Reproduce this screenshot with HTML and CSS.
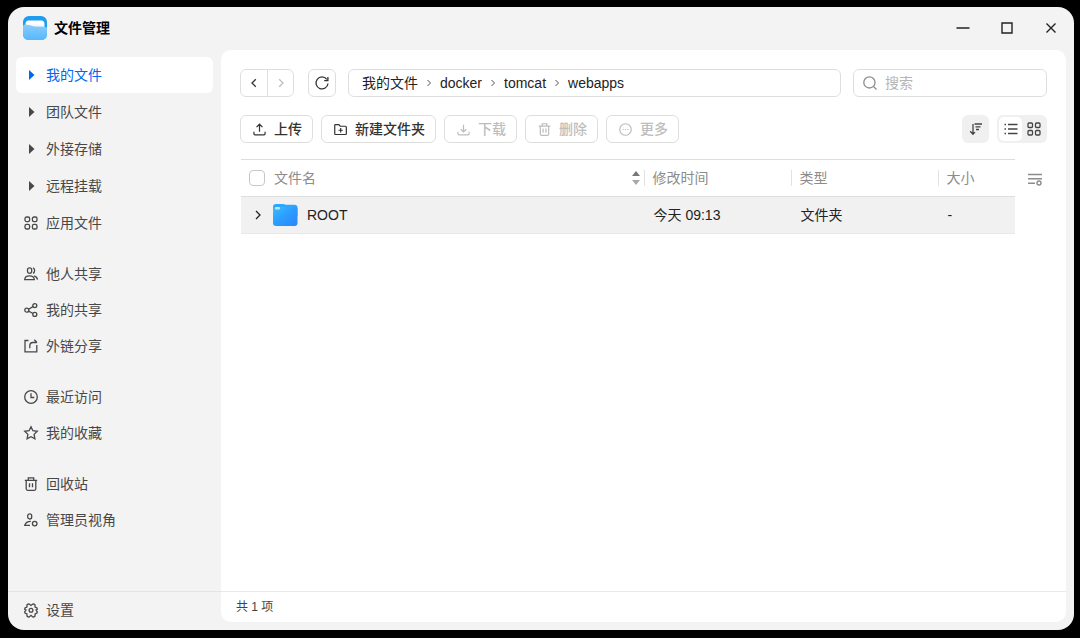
FILE: index.html
```html
<!DOCTYPE html>
<html lang="zh-CN">
  <head>
    <meta charset="UTF-8">
    <meta name="viewport" content="width=device-width, initial-scale=1">
    <title>文件管理</title>
    <link rel="stylesheet" href="styles.css">
  </head>
  <body>
    <div class="window">
      <header class="titlebar">
        <svg class="app-logo" viewBox="0 0 24 24">
          <defs>
            <linearGradient id="logoFront" x1="0" y1="0" x2="0" y2="1">
              <stop offset="0" stop-color="#8accfb"/>
              <stop offset="1" stop-color="#55b8fb"/>
            </linearGradient>
            <linearGradient id="logoPaper" x1="0" y1="0" x2="0" y2="1">
              <stop offset="0.3" stop-color="#fff"/>
              <stop offset="1" stop-color="#c9e8fe"/>
            </linearGradient>
          </defs>
          <rect width="24" height="24" rx="6" fill="#1e9cf0"/>
          <path d="M2.500 8q0-3.500 3-3.500h13q3 0 3 3.500v6h-19z" fill="url(#logoPaper)"/>
          <path d="M0 10.500q0-2 2-2 2.500 0 5 .8t5 1.200l9.500.2q2.500 0 2.500 1.500V18q0 6-6 6H6q-6 0-6-6z" fill="url(#logoFront)"/>
        </svg>
        <h1>文件管理</h1>
        <div class="window-controls">
          <button aria-label="最小化"><svg viewBox="0 0 14 14"><path d="M0.500 7h13"/></svg></button>
          <button aria-label="最大化"><svg viewBox="0 0 14 14"><path d="M2 2h10v10H2z"/></svg></button>
          <button aria-label="关闭"><svg viewBox="0 0 14 14"><path d="M2.500 2.500l9 9M11.500 2.500l-9 9"/></svg></button>
        </div>
      </header>

      <aside class="sidebar">
        <nav class="side-nav">
          <div class="nav-group tree">
            <a href="#" class="nav-item active"><svg class="icon arrow" viewBox="0 0 14 14"><path d="M5 2v10l5.500-5z"/></svg>我的文件</a>
            <a href="#" class="nav-item"><svg class="icon arrow" viewBox="0 0 14 14"><path d="M5 2v10l5.500-5z"/></svg>团队文件</a>
            <a href="#" class="nav-item"><svg class="icon arrow" viewBox="0 0 14 14"><path d="M5 2v10l5.500-5z"/></svg>外接存储</a>
            <a href="#" class="nav-item"><svg class="icon arrow" viewBox="0 0 14 14"><path d="M5 2v10l5.500-5z"/></svg>远程挂载</a>
            <a href="#" class="nav-item">
              <svg class="icon" viewBox="0 0 14 14"><rect x="1" y="1" width="4.600" height="4.600" rx="1.600"/><rect x="8.400" y="1" width="4.600" height="4.600" rx="1.600"/><rect x="1" y="8.400" width="4.600" height="4.600" rx="1.600"/><rect x="8.400" y="8.400" width="4.600" height="4.600" rx="1.600"/></svg>应用文件
            </a>
          </div>
          <div class="nav-group">
            <a href="#" class="nav-item">
              <svg class="icon" viewBox="0 0 14 14"><rect x="3.500" y=".8" width="4.200" height="5.600" rx="2.100"/><path d="M9 .9c2.200.7 2.200 4.700 0 5.400M.7 12.600c.2-5 9.400-5 9.600 0zM10.200 8.800c1.800.6 3 1.900 3.300 3.800"/></svg>他人共享
            </a>
            <a href="#" class="nav-item">
              <svg class="icon" viewBox="0 0 14 14"><circle cx="2.800" cy="7.200" r="2"/><circle cx="10.800" cy="2.600" r="2"/><circle cx="10.800" cy="11.400" r="2"/><path d="M4.600 6.200L9 3.600M4.600 8.200L9 10.500"/></svg>我的共享
            </a>
            <a href="#" class="nav-item">
              <svg class="icon" viewBox="0 0 14 14"><path d="M4.500 1.500H1v11.300h11.800V6M5.800 9.300V7q0-3.500 3-3.500h4M10.300.8L13 3.500"/></svg>外链分享
            </a>
          </div>
          <div class="nav-group">
            <a href="#" class="nav-item">
              <svg class="icon" viewBox="0 0 14 14"><circle cx="7" cy="7" r="6.300"/><path d="M7 3.200v4.300h3.300"/></svg>最近访问
            </a>
            <a href="#" class="nav-item">
              <svg class="icon" viewBox="0 0 14 14"><path d="M7 .7l1.900 4 4.400.6-3.200 3.100.8 4.500L7 10.800l-3.900 2.100.8-4.500L.7 5.300l4.400-.6z"/></svg>我的收藏
            </a>
          </div>
          <div class="nav-group">
            <a href="#" class="nav-item">
              <svg class="icon" viewBox="0 0 14 14"><path d="M.8 3.300h12.400M4.300 3V.8h5.400V3M2.200 3.500v8.300q0 1.500 1.500 1.500h6.600q1.500 0 1.500-1.500V3.500M5.500 6.200v4M8.500 6.200v4"/></svg>回收站
            </a>
            <a href="#" class="nav-item">
              <svg class="icon" viewBox="0 0 14 14"><rect x="3.700" y=".8" width="4" height="5.200" rx="2"/><path d="M6.800 8.300C3.500 8.300 1.500 9.800.8 12.300H6"/><circle cx="10.700" cy="10.600" r="2.300"/></svg>管理员视角
            </a>
          </div>
        </nav>
        <div class="side-footer">
          <a href="#" class="nav-item">
            <svg class="icon" viewBox="0 0 14 14"><path d="M4.300 1l1 .1L7 2.500 8.700 1.100l1-.1 1.300.9.1 2.200 1.900.9.300 1.200L12 7l1.300 1.800-.3 1.200-1.900.9-.1 2.200-1.300.9-1-.1L7 12.300l-1.700 1.600-1 .1-1.300-.9-.1-2.200-1.900-.9-.3-1.200L2 7 .7 6.200 1 5l1.900-.9.1-2.200z"/><circle cx="7" cy="7.300" r="1.900"/></svg>设置
          </a>
        </div>
      </aside>

      <main class="content">
        <div class="location-bar">
          <div class="history">
            <button aria-label="后退"><svg class="icon" viewBox="0 0 14 14"><path d="M8.800 3.200L5 7l3.800 3.800"/></svg></button>
            <button aria-label="前进" disabled><svg class="icon" viewBox="0 0 14 14"><path d="M5.200 3.200L9 7l-3.800 3.800"/></svg></button>
          </div>
          <button class="refresh" aria-label="刷新"><svg class="icon" viewBox="0 0 14 14"><path d="M11.800 3.300A6 6 0 1 0 13 7.500M12.900 1v3.700H9.200"/></svg></button>
          <nav class="breadcrumb">
            <a href="#">我的文件</a>
            <svg viewBox="0 0 6 8"><path d="M1.500 1L4.500 4l-3 3"/></svg>
            <a href="#">docker</a>
            <svg viewBox="0 0 6 8"><path d="M1.500 1L4.500 4l-3 3"/></svg>
            <a href="#">tomcat</a>
            <svg viewBox="0 0 6 8"><path d="M1.500 1L4.500 4l-3 3"/></svg>
            <a href="#">webapps</a>
          </nav>
          <label class="search">
            <svg class="icon" viewBox="0 0 14 14"><circle cx="6.400" cy="6.400" r="5.600"/><path d="M10.500 10.500l3 3"/></svg>
            <input type="search" placeholder="搜索" aria-label="搜索">
          </label>
        </div>

        <div class="toolbar">
          <button class="btn"><svg class="icon" viewBox="0 0 14 14"><path d="M1 9.500v2.200q0 1.100 1.100 1.100h9.800q1.100 0 1.100-1.100V9.500M7 9.500V1.500M3.800 4.500L7 1.300l3.200 3.200"/></svg>上传</button>
          <button class="btn"><svg class="icon" viewBox="0 0 14 14"><path d="M.8 11.200V2.500q0-.8.8-.8h3.600l1.500 1.800h5.600q1 0 1 1v6.900q0 1-1 1H1.600q-.8 0-.8-1.200zM7.200 5.500v4.600M4.900 7.800h4.600"/></svg>新建文件夹</button>
          <button class="btn" disabled><svg class="icon" viewBox="0 0 14 14"><path d="M1 9.500v2.200q0 1.100 1.100 1.100h9.800q1.100 0 1.100-1.100V9.500M7 2v7.500M4 6.700l3 3 3-3"/></svg>下载</button>
          <button class="btn" disabled><svg class="icon" viewBox="0 0 14 14"><path d="M.8 3.300h12.400M4.500 3V.8h5V3M2.500 3.500v8.300q0 1.500 1.500 1.500h6q1.500 0 1.500-1.500V3.500M5.500 6v4.500M8.500 6v4.500"/></svg>删除</button>
          <button class="btn" disabled><svg class="icon" viewBox="0 0 14 14"><circle cx="7" cy="7" r="6.200"/><path d="M3.700 7H5M6.300 7h1.400M9 7h1.300"/></svg>更多</button>
          <div class="view-tools">
            <button class="sort-btn" aria-label="排序"><svg class="icon" viewBox="0 0 14 14"><path d="M4 2v10M1.200 9.300L4 12.200l2-2M5.500 2H13M6.500 4.800h5M7 7.500h3"/></svg></button>
            <div class="view-switch">
              <button class="selected" aria-label="列表视图"><svg class="icon" viewBox="0 0 14 14"><path d="M.5 2.500H2M.5 7H2M.5 11.500H2M4 2.500h9.500M4 7h9.500M4 11.500h9.500"/></svg></button>
              <button aria-label="网格视图"><svg class="icon" viewBox="0 0 14 14"><rect x="1" y="1" width="4.500" height="4.500" rx="1"/><rect x="8.500" y="1" width="4.500" height="4.500" rx="1"/><rect x="1" y="8.500" width="4.500" height="4.500" rx="1"/><rect x="8.500" y="8.500" width="4.500" height="4.500" rx="1"/></svg></button>
            </div>
          </div>
        </div>

        <div class="list">
          <table class="files">
            <colgroup>
              <col class="col-name">
              <col class="col-time">
              <col class="col-type">
              <col class="col-size">
            </colgroup>
            <thead>
              <tr>
                <th>
                  <div class="name-head">
                    <input type="checkbox" aria-label="全选">
                    <span>文件名</span>
                    <svg class="sorter" viewBox="0 0 8 16"><path d="M4 1l4 5H0z" fill="#777"/><path d="M4 15l4-5H0z" fill="#aaa"/></svg>
                  </div>
                </th>
                <th><div class="head-cell">修改时间</div></th>
                <th><div class="head-cell">类型</div></th>
                <th><div class="head-cell">大小</div></th>
              </tr>
            </thead>
            <tbody>
              <tr>
                <td>
                  <div class="name-cell">
                    <svg class="expand" viewBox="0 0 14 14"><path d="M5 3l4 4-4 4"/></svg>
                    <svg class="folder" viewBox="0 0 26 22">
                      <defs>
                        <linearGradient id="folderFill" x1="0" y1="0" x2="1" y2="1">
                          <stop offset="0" stop-color="#3dbcff"/>
                          <stop offset="0.5" stop-color="#2b9cff"/>
                          <stop offset="1" stop-color="#2b84fa"/>
                        </linearGradient>
                      </defs>
                      <path d="M1 3q0-3 3-3h7q1.500 0 2.500.8h9q3 0 3 3V12H1z" fill="#2ea6fb"/>
                      <path d="M1 4.500q0-1.500 1.500-1.500h21.500q1.500 0 1.500 1.500V19q0 3-3 3H4q-3 0-3-3z" fill="url(#folderFill)"/>
                      <rect x="3" y="3" width="5" height="2.500" rx="1" fill="#b9e9ff"/>
                    </svg>
                    <span>ROOT</span>
                  </div>
                </td>
                <td>今天 09:13</td>
                <td>文件夹</td>
                <td>-</td>
              </tr>
            </tbody>
          </table>
          <button class="columns-btn" aria-label="列设置"><svg viewBox="0 0 16 16"><path d="M1 3.500h14M1 7.800h14M1 12.200h7"/><circle cx="12" cy="12" r="2"/></svg></button>
        </div>

        <footer class="status">共 1 项</footer>
      </main>
    </div>
  </body>
</html>
```

FILE: styles.css
```css
:root {
  --bg: #f3f3f3;
  --line: #dedede;
  --text: #222;
  --text-side: #484848;
  --muted: #8c8c8c;
  --disabled: #bdbdbd;
  --accent: #0066f5;
}

* {
  box-sizing: border-box;
}

body {
  margin: 0;
  min-height: 100vh;
  padding: 7px 6px 8px 8px;
  display: flex;
  background: #000;
  color: var(--text);
  font-family: "Liberation Sans", "Noto Sans CJK SC", sans-serif;
  font-size: 14px;
  line-height: 20px;
}

a {
  color: inherit;
  text-decoration: none;
}

button {
  display: flex;
  align-items: center;
  justify-content: center;
  padding: 0;
  border: 0;
  background: none;
  color: inherit;
  font: inherit;
}

svg {
  flex: none;
  fill: none;
  stroke: currentColor;
}

.icon {
  width: 14px;
  height: 14px;
  stroke-width: 1.3;
  overflow: visible;
}

.window {
  flex: 1;
  display: grid;
  grid-template-columns: 213px 1fr;
  grid-template-rows: 43px 1fr;
  background: var(--bg);
  border-radius: 16px;
  overflow: hidden;
}

/* title bar */
.titlebar {
  grid-column: 1 / -1;
  display: flex;
  align-items: center;
  padding: 0 1px 1px 15px;
}

.app-logo {
  width: 24px;
  height: 24px;
  margin-right: 7px;
  stroke: none;
}

h1 {
  margin: 0;
  font-size: 14px;
  font-weight: 600;
  color: #000;
}

.window-controls {
  display: flex;
  margin-left: auto;
}

.window-controls button {
  width: 44px;
  height: 42px;
}

.window-controls svg {
  width: 14px;
  height: 14px;
  stroke-width: 1.4;
}

/* sidebar */
.sidebar {
  display: flex;
  flex-direction: column;
}

.side-nav {
  flex: 1;
  display: flex;
  flex-direction: column;
  gap: 15px;
  padding: 7px 8px;
}

.tree {
  display: grid;
  gap: 1px;
}

.nav-item {
  display: flex;
  align-items: center;
  gap: 8px;
  height: 36px;
  padding: 0 8px;
  border-radius: 6px;
  color: var(--text-side);
}

.nav-item.active {
  background: #fff;
  color: var(--accent);
}

.arrow {
  fill: currentColor;
  stroke: none;
}

.side-footer {
  padding: 0 8px 2px;
  border-top: 1px solid #e4e4e4;
}

/* main panel */
.content {
  display: flex;
  flex-direction: column;
  min-width: 0;
  margin: 0 8px 8px 0;
  background: #fff;
  border-radius: 10px;
}

.location-bar {
  display: flex;
  gap: 12px;
  padding: 19px 19px 0;
}

.history,
.refresh,
.breadcrumb,
.search,
.btn {
  height: 28px;
  border: 1px solid var(--line);
  border-radius: 6px;
}

.history {
  display: flex;
  margin-right: 2px;
}

.history button {
  width: 26px;
}

.history button + button {
  border-left: 1px solid var(--line);
}

.history,
.refresh,
.btn {
  color: #333;
}

button:disabled {
  color: var(--disabled);
}

.refresh {
  width: 28px;
}

.breadcrumb {
  flex: 1;
  display: flex;
  align-items: center;
  gap: 8px;
  padding: 0 13px;
}

.breadcrumb svg {
  width: 6px;
  height: 8px;
  color: #555;
}

.search {
  display: flex;
  align-items: center;
  gap: 8px;
  width: 194px;
  padding: 0 9px;
  color: var(--muted);
}

.search input {
  flex: 1;
  min-width: 0;
  padding: 0;
  border: 0;
  outline: 0;
  background: none;
  font: inherit;
  color: var(--text);
}

.search input::placeholder {
  color: #b5b5b5;
}

.toolbar {
  display: flex;
  gap: 8px;
  padding: 18px 19px 16px;
}

.btn {
  gap: 8px;
  padding: 0 10px 0 12px;
  font-weight: 500;
}

.btn .icon {
  width: 13px;
  height: 13px;
}

.view-tools {
  display: flex;
  gap: 8px;
  margin-left: auto;
  color: #444;
}

.sort-btn {
  width: 27px;
  height: 28px;
  border-radius: 6px;
  background: #f0f0f0;
}

.view-switch {
  display: flex;
  padding: 2px;
  border-radius: 6px;
  background: #f0f0f0;
}

.view-switch button {
  width: 23px;
  height: 24px;
  border-radius: 5px;
}

.view-switch .selected {
  background: #fff;
}

/* file list */
.list {
  flex: 1;
  display: flex;
  align-items: flex-start;
  gap: 12px;
  padding: 0 23px 0 20px;
}

.files {
  flex: 1;
  table-layout: fixed;
  border-collapse: collapse;
}

.col-time,
.col-type {
  width: 19%;
}

.col-size {
  width: 10%;
}

.files th,
.files td {
  height: 37px;
  padding: 0;
  border-top: 1px solid var(--line);
  text-align: left;
  font-weight: 400;
}

.files th {
  color: var(--muted);
}

.files td {
  padding-left: 10px;
}

.files tbody tr {
  background: #f1f1f1;
  border-bottom: 1px solid #e8e8e8;
}

.name-head {
  display: flex;
  align-items: center;
  padding: 0 4px 0 8px;
}

.name-head input {
  appearance: none;
  width: 16px;
  height: 16px;
  margin: 0 9px 0 0;
  border: 1px solid #c8c8c8;
  border-radius: 4px;
  background: #fff;
}

.sorter {
  width: 8px;
  height: 16px;
  margin-left: auto;
  stroke: none;
}

.head-cell {
  height: 16px;
  padding-left: 8px;
  border-left: 1px solid #e2e2e2;
  line-height: 16px;
}

.name-cell {
  display: flex;
  align-items: center;
}

.expand {
  width: 14px;
  height: 14px;
  margin-right: 7px;
  stroke-width: 1.3;
}

.folder {
  width: 26px;
  height: 22px;
  margin-right: 9px;
  stroke: none;
}

.columns-btn {
  width: 16px;
  height: 40px;
  color: var(--muted);
}

.columns-btn svg {
  width: 16px;
  height: 16px;
  stroke-width: 1.4;
}

.status {
  height: 31px;
  padding: 0 15px;
  border-top: 1px solid #e8e8e8;
  font-size: 12px;
  line-height: 30px;
  color: #444;
}
```
